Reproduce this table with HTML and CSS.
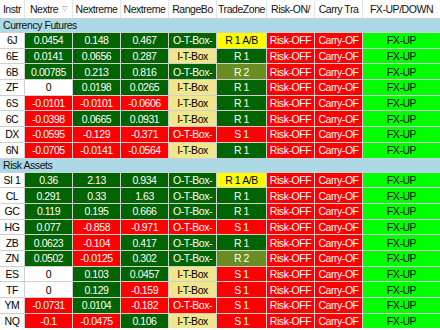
FILE: index.html
```html
<!DOCTYPE html>
<html>
<head>
<meta charset="utf-8">
<link rel="stylesheet" href="styles.css">
</head>
<body>
<div class="grid">
  <div class="row head">
    <div class="c">Instr</div>
    <div class="c sort">Nextre <span class="tri">&#9661;</span></div>
    <div class="c">Nextreme</div>
    <div class="c">Nextreme</div>
    <div class="c">RangeBo</div>
    <div class="c">TradeZone</div>
    <div class="c">Risk-ON/</div>
    <div class="c">Carry Tra</div>
    <div class="c">FX-UP/DOWN</div>
  </div>
  <div class="row group"><div class="gc">Currency Futures</div></div>

  <div class="row"><div class="c w">6J</div><div class="c g">0.0454</div><div class="c g">0.148</div><div class="c g">0.467</div><div class="c g">O-T-Box-</div><div class="c y">R 1 A/B</div><div class="c r">Risk-OFF</div><div class="c r">Carry-OF</div><div class="c l">FX-UP</div></div>
  <div class="row"><div class="c w">6E</div><div class="c g">0.0141</div><div class="c g">0.0656</div><div class="c g">0.287</div><div class="c k">I-T-Box</div><div class="c g">R 1</div><div class="c r">Risk-OFF</div><div class="c r">Carry-OF</div><div class="c l">FX-UP</div></div>
  <div class="row"><div class="c w">6B</div><div class="c g">0.00785</div><div class="c g">0.213</div><div class="c g">0.816</div><div class="c g">O-T-Box-</div><div class="c o">R 2</div><div class="c r">Risk-OFF</div><div class="c r">Carry-OF</div><div class="c l">FX-UP</div></div>
  <div class="row"><div class="c w">ZF</div><div class="c w">0</div><div class="c g">0.0198</div><div class="c g">0.0265</div><div class="c k">I-T-Box</div><div class="c g">R 1</div><div class="c r">Risk-OFF</div><div class="c r">Carry-OF</div><div class="c l">FX-UP</div></div>
  <div class="row"><div class="c w">6S</div><div class="c r">-0.0101</div><div class="c r">-0.0101</div><div class="c r">-0.0606</div><div class="c k">I-T-Box</div><div class="c g">R 1</div><div class="c r">Risk-OFF</div><div class="c r">Carry-OF</div><div class="c l">FX-UP</div></div>
  <div class="row"><div class="c w">6C</div><div class="c r">-0.0398</div><div class="c g">0.0665</div><div class="c g">0.0931</div><div class="c k">I-T-Box</div><div class="c g">R 1</div><div class="c r">Risk-OFF</div><div class="c r">Carry-OF</div><div class="c l">FX-UP</div></div>
  <div class="row"><div class="c w">DX</div><div class="c r">-0.0595</div><div class="c r">-0.129</div><div class="c r">-0.371</div><div class="c r">O-T-Box-</div><div class="c r">S 1</div><div class="c r">Risk-OFF</div><div class="c r">Carry-OF</div><div class="c l">FX-UP</div></div>
  <div class="row"><div class="c w">6N</div><div class="c r">-0.0705</div><div class="c r">-0.0141</div><div class="c r">-0.0564</div><div class="c k">I-T-Box</div><div class="c g">R 1</div><div class="c r">Risk-OFF</div><div class="c r">Carry-OF</div><div class="c l">FX-UP</div></div>

  <div class="row group"><div class="gc">Risk Assets</div></div>

  <div class="row"><div class="c w">SI 1</div><div class="c g">0.36</div><div class="c g">2.13</div><div class="c g">0.934</div><div class="c g">O-T-Box-</div><div class="c y">R 1 A/B</div><div class="c r">Risk-OFF</div><div class="c r">Carry-OF</div><div class="c l">FX-UP</div></div>
  <div class="row"><div class="c w">CL</div><div class="c g">0.291</div><div class="c g">0.33</div><div class="c g">1.63</div><div class="c g">O-T-Box-</div><div class="c g">R 1</div><div class="c r">Risk-OFF</div><div class="c r">Carry-OF</div><div class="c l">FX-UP</div></div>
  <div class="row"><div class="c w">GC</div><div class="c g">0.119</div><div class="c g">0.195</div><div class="c g">0.666</div><div class="c g">O-T-Box-</div><div class="c g">R 1</div><div class="c r">Risk-OFF</div><div class="c r">Carry-OF</div><div class="c l">FX-UP</div></div>
  <div class="row"><div class="c w">HG</div><div class="c g">0.077</div><div class="c r">-0.858</div><div class="c r">-0.971</div><div class="c r">O-T-Box-</div><div class="c r">S 1</div><div class="c r">Risk-OFF</div><div class="c r">Carry-OF</div><div class="c l">FX-UP</div></div>
  <div class="row"><div class="c w">ZB</div><div class="c g">0.0623</div><div class="c r">-0.104</div><div class="c g">0.417</div><div class="c g">O-T-Box-</div><div class="c g">R 1</div><div class="c r">Risk-OFF</div><div class="c r">Carry-OF</div><div class="c l">FX-UP</div></div>
  <div class="row"><div class="c w">ZN</div><div class="c g">0.0502</div><div class="c r">-0.0125</div><div class="c g">0.302</div><div class="c g">O-T-Box-</div><div class="c o">R 2</div><div class="c r">Risk-OFF</div><div class="c r">Carry-OF</div><div class="c l">FX-UP</div></div>
  <div class="row"><div class="c w">ES</div><div class="c w">0</div><div class="c g">0.103</div><div class="c g">0.0457</div><div class="c k">I-T-Box</div><div class="c r">S 1</div><div class="c r">Risk-OFF</div><div class="c r">Carry-OF</div><div class="c l">FX-UP</div></div>
  <div class="row"><div class="c w">TF</div><div class="c w">0</div><div class="c g">0.129</div><div class="c r">-0.159</div><div class="c k">I-T-Box</div><div class="c r">S 1</div><div class="c r">Risk-OFF</div><div class="c r">Carry-OF</div><div class="c l">FX-UP</div></div>
  <div class="row"><div class="c w">YM</div><div class="c r">-0.0731</div><div class="c g">0.0104</div><div class="c r">-0.182</div><div class="c r">O-T-Box-</div><div class="c r">S 1</div><div class="c r">Risk-OFF</div><div class="c r">Carry-OF</div><div class="c l">FX-UP</div></div>
  <div class="row"><div class="c w">NQ</div><div class="c r">-0.1</div><div class="c r">-0.0475</div><div class="c g">0.106</div><div class="c k">I-T-Box</div><div class="c r">S 1</div><div class="c r">Risk-OFF</div><div class="c r">Carry-OF</div><div class="c l">FX-UP</div></div>
</div>
</body>
</html>
```

FILE: styles.css
```css
html, body {
  margin: 0;
  padding: 0;
  width: 440px;
  height: 330px;
  overflow: hidden;
  background: #ffffff;
}
body {
  font-family: "Liberation Sans", Arial, sans-serif;
  font-size: 10.5px;
  letter-spacing: -0.45px;
  color: #000;
}
.grid {
  display: flex;
  flex-direction: column;
  gap: 1px;
  background: #d0d0d0;
  width: 440px;
}
.row {
  display: grid;
  grid-template-columns: 24px 47px 47px 47px 47px 49px 47px 47px 77px;
  column-gap: 1px;
  height: 14.7px;
  flex: none;
}
.c {
  display: flex;
  align-items: center;
  justify-content: center;
  overflow: hidden;
  white-space: nowrap;
  line-height: 14px;
}
.head {
  height: 18px;
  background: #e4e4e4;
}
.head .c {
  background: #ffffff;
  color: #111;
}
.sort {
  gap: 4px;
}
.tri {
  font-size: 7px;
  color: #888;
  letter-spacing: 0;
}
.group {
  display: flex;
  height: 13px;
  background: #add8e6;
}
.gc {
  padding-left: 3px;
  line-height: 13px;
  color: #111;
}
.w { background: #ffffff; color: #000; }
.g { background: #006400; color: #ffffff; }
.r { background: #ff0000; color: #ffffff; }
.l { background: #00ff00; color: #000; }
.y { background: #ffff00; color: #000; }
.k { background: #f0e68c; color: #000; }
.o { background: #6b8e23; color: #ffffff; }
```
